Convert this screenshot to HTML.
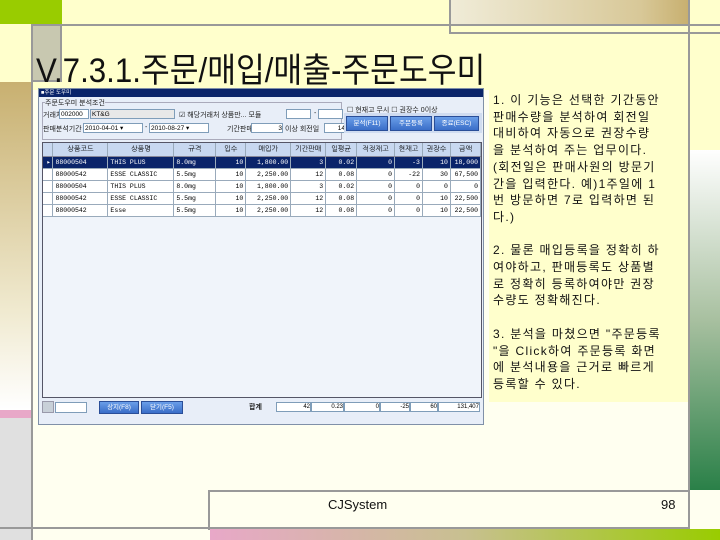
<!DOCTYPE html>
<html><head><meta charset="utf-8"><style>
*{margin:0;padding:0;box-sizing:border-box}
body{width:720px;height:540px;background:#fffff0;position:relative;overflow:hidden;font-family:"Liberation Sans","Noto Sans CJK KR","NanumGothic",sans-serif}
.a{position:absolute}
.t{font-size:7px;color:#222;white-space:nowrap}
table{border-collapse:collapse;font-size:6.5px;font-family:"Liberation Mono","NanumGothic",monospace}
td{height:12px;border-right:1px solid #9ab;border-bottom:1px solid #9ab;padding:0 2px;text-align:right;white-space:nowrap}
th{height:13px;background:#c8d8f0;border-right:1px solid #9ab;border-bottom:1px solid #889;font-weight:normal;font-size:7px;font-family:"Liberation Sans","NanumGothic",sans-serif}
.sel td{background:#0a246a;color:#fff}
.btn{position:absolute;background:linear-gradient(#6a9ee8,#3a6ec8);color:#fff;font-size:6.5px;text-align:center;border:1px solid #2a4e98}
.inp{position:absolute;background:#fff;border:1px solid #7f9db9;font-size:6.5px;line-height:9px;padding-left:1px}
</style></head><body>
<div class="a" style="left:0;top:0;width:720px;height:90px;background:#ffffcc"></div>
<div class="a" style="left:0;top:0;width:62px;height:24px;background:#99cc00"></div>
<div class="a" style="left:450px;top:0;width:238px;height:24px;background:linear-gradient(90deg,#f0ecd8,#d8c898 80%,#c8b070)"></div>
<div class="a" style="left:62px;top:24px;width:658px;height:2px;background:#999"></div>
<div class="a" style="left:449px;top:0;width:2px;height:34px;background:#999"></div>
<div class="a" style="left:449px;top:32px;width:271px;height:2px;background:#999"></div>
<div class="a" style="left:688px;top:0;width:2px;height:528px;background:#999"></div>
<div class="a" style="left:690px;top:34px;width:30px;height:116px;background:#ffffcc"></div>
<div class="a" style="left:690px;top:150px;width:30px;height:340px;background:linear-gradient(#fff,#a8c0a0 50%,#2a8048)"></div>
<div class="a" style="left:0;top:26px;width:31px;height:56px;background:#ffffcc"></div>
<div class="a" style="left:31px;top:24px;width:31px;height:58px;background:#c8c8b0;border:2px solid #999"></div>
<div class="a" style="left:0;top:82px;width:31px;height:328px;background:linear-gradient(#c8b070,#f0ead0 70%,#fff)"></div>
<div class="a" style="left:0;top:410px;width:31px;height:8px;background:#e8a8c8"></div>
<div class="a" style="left:0;top:418px;width:31px;height:122px;background:#e0e0e0"></div>
<div class="a" style="left:31px;top:82px;width:2px;height:458px;background:#999"></div>
<div class="a" style="left:36px;top:53px;font-size:34px;line-height:36px;color:#111;white-space:nowrap;transform:scaleX(0.92);transform-origin:0 0">V.7.3.1.주문/매입/매출-주문도우미</div>
<div class="a" style="left:38px;top:88px;width:446px;height:337px;background:#e8eef8;border:1px solid #8090a8">
 <div class="a" style="left:0;top:0;width:444px;height:8px;background:#0a246a;color:#fff;font-size:5.5px;line-height:8px;padding-left:2px">■주문 도우미</div>
 <div class="a" style="left:3px;top:13px;width:300px;height:38px;border:1px solid #aab;"></div>
 <div class="a t" style="left:6px;top:9px;background:#e8eef8">주문도우미 분석조건</div>
 <div class="a t" style="left:4px;top:21px">거래처</div>
 <div class="inp" style="left:20px;top:20px;width:30px;height:10px">002000</div>
 <div class="inp" style="left:51px;top:20px;width:85px;height:10px;background:#e8e8e8">KT&amp;G</div>
 <div class="a t" style="left:140px;top:21px">☑ 해당거래처 상품만...  모듈</div>
 <div class="inp" style="left:247px;top:20px;width:25px;height:10px"></div>
 <div class="a t" style="left:275px;top:21px">-</div>
 <div class="inp" style="left:279px;top:20px;width:25px;height:10px"></div>
 <div class="a t" style="left:4px;top:35px">판매분석기간</div>
 <div class="inp" style="left:44px;top:34px;width:60px;height:10px">2010-04-01 ▾</div>
 <div class="a t" style="left:106px;top:35px">-</div>
 <div class="inp" style="left:110px;top:34px;width:60px;height:10px">2010-08-27 ▾</div>
 <div class="a t" style="left:188px;top:35px">기간판매</div>
 <div class="inp" style="left:212px;top:34px;width:32px;height:10px;text-align:right">3</div>
 <div class="a t" style="left:246px;top:35px">이상  회전일</div>
 <div class="inp" style="left:285px;top:34px;width:22px;height:10px;text-align:right">14</div>
 <div class="a t" style="left:308px;top:16px">☐ 현재고 무시 ☐ 권장수 0이상</div>
 <div class="a" style="left:305px;top:24px;width:138px;height:20px;background:#d0dcf0"></div>
 <div class="btn" style="left:307px;top:27px;width:42px;height:15px;line-height:13px">분석(F11)</div>
 <div class="btn" style="left:351px;top:27px;width:42px;height:15px;line-height:13px">주문등록</div>
 <div class="btn" style="left:395px;top:27px;width:45px;height:15px;line-height:13px">종료(ESC)</div>
 <div class="a" style="left:3px;top:53px;width:440px;height:256px;background:#f0f4fa;border:1px solid #556">
 <table style="width:438px">
 <tr><th style="width:10px"></th><th style="width:55px">상품코드</th><th style="width:66px">상품명</th><th style="width:42px">규격</th><th style="width:30px">입수</th><th style="width:45px">매입가</th><th style="width:35px">기간판매</th><th style="width:31px">일평균</th><th style="width:38px">적정재고</th><th style="width:28px">현재고</th><th style="width:28px">권장수</th><th style="width:30px">금액</th></tr>
 <tr class="sel"><td>▸</td><td style="text-align:left">88000504</td><td style="text-align:left">THIS PLUS</td><td style="text-align:left">8.0mg</td><td>10</td><td>1,800.00</td><td>3</td><td>0.02</td><td>0</td><td>-3</td><td>10</td><td>18,000</td></tr>
 <tr style="background:#fff"><td></td><td style="text-align:left">88000542</td><td style="text-align:left">ESSE CLASSIC</td><td style="text-align:left">5.5mg</td><td>10</td><td>2,250.00</td><td>12</td><td>0.08</td><td>0</td><td>-22</td><td>30</td><td>67,500</td></tr>
 <tr style="background:#fff"><td></td><td style="text-align:left">88000504</td><td style="text-align:left">THIS PLUS</td><td style="text-align:left">8.0mg</td><td>10</td><td>1,800.00</td><td>3</td><td>0.02</td><td>0</td><td>0</td><td>0</td><td>0</td></tr>
 <tr style="background:#fff"><td></td><td style="text-align:left">88000542</td><td style="text-align:left">ESSE CLASSIC</td><td style="text-align:left">5.5mg</td><td>10</td><td>2,250.00</td><td>12</td><td>0.08</td><td>0</td><td>0</td><td>10</td><td>22,500</td></tr>
 <tr style="background:#fff"><td></td><td style="text-align:left">88000542</td><td style="text-align:left">Esse</td><td style="text-align:left">5.5mg</td><td>10</td><td>2,250.00</td><td>12</td><td>0.08</td><td>0</td><td>0</td><td>10</td><td>22,500</td></tr>
 </table>
 </div>
 <div class="a" style="left:3px;top:312px;width:12px;height:12px;background:#c8d0d8;border:1px solid #99a"></div>
 <div class="inp" style="left:16px;top:313px;width:32px;height:11px"></div>
 <div class="btn" style="left:60px;top:312px;width:40px;height:13px;line-height:11px">상지(F8)</div>
 <div class="btn" style="left:102px;top:312px;width:42px;height:13px;line-height:11px">닫기(F5)</div>
 <div class="a t" style="left:210px;top:313px;font-weight:bold">합계</div>
 <div class="inp" style="left:237px;top:313px;width:35px;height:10px;text-align:right;font-size:6px">42</div>
 <div class="inp" style="left:272px;top:313px;width:33px;height:10px;text-align:right;font-size:6px">0.23</div>
 <div class="inp" style="left:305px;top:313px;width:36px;height:10px;text-align:right;font-size:6px">0</div>
 <div class="inp" style="left:341px;top:313px;width:30px;height:10px;text-align:right;font-size:6px">-25</div>
 <div class="inp" style="left:371px;top:313px;width:28px;height:10px;text-align:right;font-size:6px">60</div>
 <div class="inp" style="left:399px;top:313px;width:42px;height:10px;text-align:right;font-size:6px">131,407</div>
</div>
<div class="a" style="left:489px;top:90px;width:199px;height:312px;background:#ffffcc"></div>
<div class="a" style="left:493px;top:92px;width:200px;font-size:12px;line-height:16.7px;letter-spacing:1.3px;color:#111;white-space:nowrap">
1. 이 기능은 선택한 기간동안<br>판매수량을 분석하여 회전일<br>대비하여 자동으로 권장수량<br>을 분석하여 주는 업무이다.<br>(회전일은 판매사원의 방문기<br>간을 입력한다. 예)1주일에 1<br>번 방문하면 7로 입력하면 된<br>다.)<br><br>2. 물론 매입등록을 정확히 하<br>여야하고, 판매등록도 상품별<br>로 정확히 등록하여야만 권장<br>수량도 정확해진다.<br><br>3. 분석을 마쳤으면 "주문등록<br>"을 Click하여 주문등록 화면<br>에 분석내용을 근거로 빠르게<br>등록할 수 있다.
</div>
<div class="a" style="left:208px;top:490px;width:482px;height:2px;background:#999"></div>
<div class="a" style="left:208px;top:490px;width:2px;height:40px;background:#999"></div>
<div class="a" style="left:0;top:527px;width:690px;height:2px;background:#999"></div>
<div class="a" style="left:210px;top:529px;width:510px;height:11px;background:linear-gradient(90deg,#e8a8c8,#c8c090 50%,#99cc00)"></div>
<div class="a" style="left:328px;top:497px;font-size:13px;color:#111">CJSystem</div>
<div class="a" style="left:661px;top:497px;font-size:13px;color:#111">98</div>
</body></html>
